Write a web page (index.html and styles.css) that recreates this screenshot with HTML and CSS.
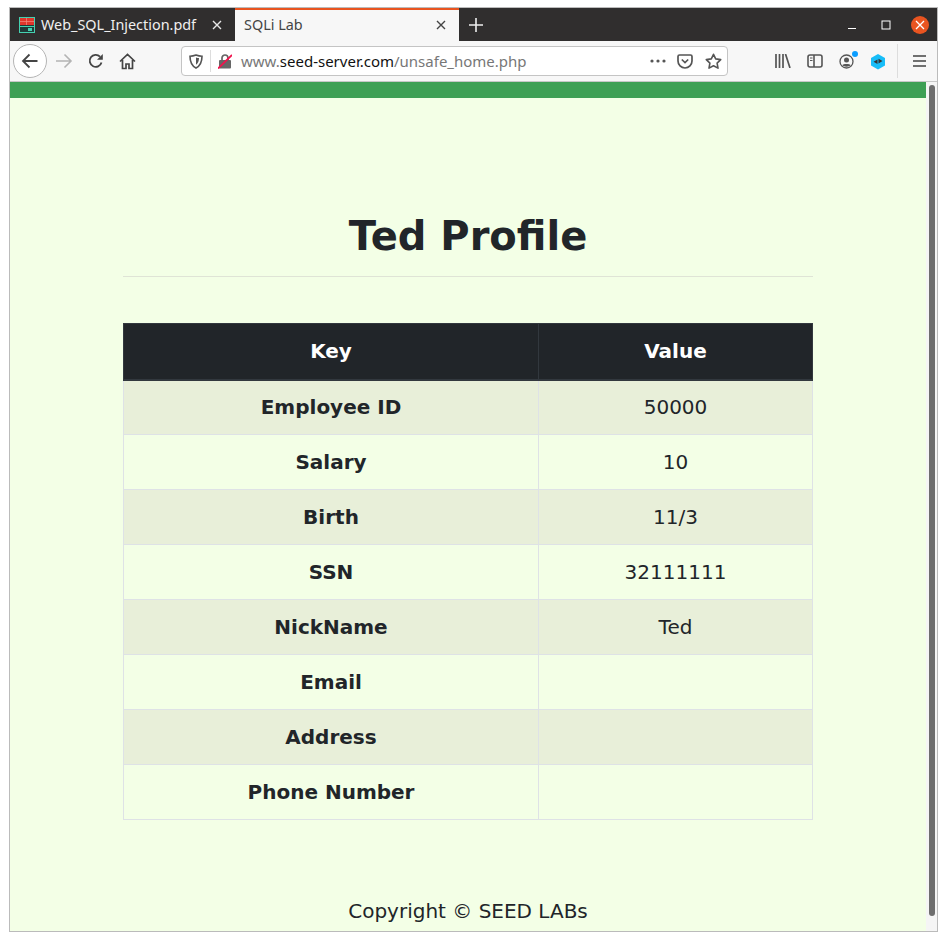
FILE: index.html
```html
<!DOCTYPE html>
<html lang="en">
<head>
    <meta charset="UTF-8">
    <title>SQLi Lab</title>
    <link rel="stylesheet" href="styles.css">
</head>
<body>
    <div class="window">
        <!-- Tab strip -->
        <div class="tabstrip">
            <div class="tab">
                <svg class="favicon" width="16" height="16" viewBox="0 0 16 16">
                    <rect x="0.5" y="0.5" width="15" height="15" fill="#1f3a38" stroke="#45d0b0"/>
                    <rect x="1" y="1" width="14" height="7" fill="#e0352b"/>
                    <path d="M7.500 1v7M1 4.500h14" stroke="#f08a80" stroke-width="0.700"/>
                    <rect x="1" y="9" width="14" height="1" fill="#45d0b0"/>
                    <rect x="9" y="11" width="4" height="3" fill="#45d0b0"/>
                </svg>
                <span class="tab-title">Web_SQL_Injection.pdf</span>
                <svg class="tab-close" width="10" height="10" viewBox="0 0 10 10"><path d="M1 1l8 8M9 1l-8 8" stroke="#e8e8e8" stroke-width="1.4"/></svg>
            </div>
            <div class="tab tab-active">
                <span class="tab-title">SQLi Lab</span>
                <svg class="tab-close" width="10" height="10" viewBox="0 0 10 10"><path d="M1 1l8 8M9 1l-8 8" stroke="#444" stroke-width="1.4"/></svg>
            </div>
            <svg class="new-tab" width="14" height="14" viewBox="0 0 14 14"><path d="M7 0v14M0 7h14" stroke="#eee" stroke-width="1.6"/></svg>
            <div class="win-controls">
                <svg width="10" height="10" viewBox="0 0 10 10"><path d="M1 8.500h8" stroke="#fff" stroke-width="1"/></svg>
                <svg width="10" height="10" viewBox="0 0 10 10"><rect x="1" y="1" width="8" height="8" fill="none" stroke="#fff"/></svg>
                <span class="win-close">
                    <svg width="10" height="10" viewBox="0 0 10 10"><path d="M1 1l8 8M9 1l-8 8" stroke="#fff" stroke-width="1.3"/></svg>
                </span>
            </div>
        </div>

        <!-- Toolbar -->
        <div class="toolbar">
            <span class="back-btn">
                <svg width="18" height="16" viewBox="0 0 18 16"><path d="M16.500 8H2M8.500 1.500L2 8l6.500 6.500" fill="none" stroke="#444" stroke-width="1.800"/></svg>
            </span>
            <svg class="forward" width="18" height="16" viewBox="0 0 18 16"><path d="M1 8h15M9.500 1.500L16 8l-6.500 6.500" fill="none" stroke="#b4b4b4" stroke-width="1.600"/></svg>
            <svg class="reload" width="16" height="16" viewBox="0 0 16 16"><path d="M13.500 9.500A6 6 0 1 1 12 3.600" fill="none" stroke="#444" stroke-width="1.800"/><path d="M14.800 1v5.800H9z" fill="#444"/></svg>
            <svg class="home" width="17" height="17" viewBox="0 0 17 17"><path d="M1 8.500L8.500 1.500 16 8.500M3.500 7v8.500h3.500v-4.500h3v4.500h3.500V7" fill="none" stroke="#444" stroke-width="1.700"/></svg>
            <div class="urlbar">
                <svg class="shield" width="14" height="15" viewBox="0 0 14 15"><path d="M7 1c2 .8 4 1.200 6 1.200 0 5-1.500 9.500-6 11.800C2.500 11.700 1 7.200 1 2.200 3 2.200 5 1.800 7 1z" fill="none" stroke="#555" stroke-width="1.600"/><path d="M7 3.500c1 .4 2 .6 3 .6 0 2.800-1 5.300-3 6.700z" fill="#555"/></svg>
                <span class="url-sep"></span>
                <svg class="lock" width="14" height="15" viewBox="0 0 14 15"><rect x="1" y="6" width="12" height="8.500" rx="1" fill="#666"/><path d="M4 6V4a3 3 0 0 1 6 0v2" fill="none" stroke="#666" stroke-width="1.700"/><path d="M0 14.500L14 1" stroke="#f0134d" stroke-width="1.800"/></svg>
                <span class="url"><span class="url-dim">www.</span>seed-server.com<span class="url-dim">/unsafe_home.php</span></span>
                <svg class="dots" width="16" height="4" viewBox="0 0 16 4"><circle cx="2" cy="2" r="1.600" fill="#555"/><circle cx="8" cy="2" r="1.600" fill="#555"/><circle cx="14" cy="2" r="1.600" fill="#555"/></svg>
                <svg class="pocket" width="16" height="15" viewBox="0 0 16 15"><path d="M1 2.500A1.500 1.500 0 0 1 2.500 1h11A1.500 1.500 0 0 1 15 2.500V7a7 7 0 0 1-14 0z" fill="none" stroke="#555" stroke-width="1.700"/><path d="M4.800 5.500L8 8.500l3.200-3" fill="none" stroke="#555" stroke-width="1.700"/></svg>
                <svg class="star" width="17" height="16" viewBox="0 0 17 16"><path d="M8.500 1.300l2.200 4.600 5 .7-3.600 3.500.9 5-4.500-2.400L4 15.100l.9-5L1.300 6.600l5-.7z" fill="none" stroke="#555" stroke-width="1.600" stroke-linejoin="round"/></svg>
            </div>
            <div class="tool-icons">
                <svg width="16" height="14" viewBox="0 0 16 14"><path d="M1 0v14M4.500 0v14M8 0v14M10.500 0L15 14" stroke="#555" stroke-width="1.700" fill="none"/></svg>
                <svg width="16" height="14" viewBox="0 0 16 14"><rect x="1" y="1" width="14" height="12" rx="2" fill="none" stroke="#555" stroke-width="1.600"/><path d="M7 1v12" stroke="#555" stroke-width="1.600"/><path d="M3 4h2.500M3 6.500h2.500" stroke="#555" stroke-width="1.200"/></svg>
                <span class="account">
                    <svg width="15" height="15" viewBox="0 0 15 15"><circle cx="7.500" cy="7.500" r="6.500" fill="none" stroke="#555" stroke-width="1.300"/><circle cx="7.500" cy="6" r="2.500" fill="#555"/><path d="M3.200 11.300c1-1.800 7.600-1.800 8.600 0-1.800 1.900-6.800 1.900-8.600 0z" fill="#555"/></svg>
                    <i class="account-dot"></i>
                </span>
                <svg width="16" height="17" viewBox="0 0 16 17"><path d="M8 1l7 4v7.500l-7 4-7-4V5z" fill="#18bdf8"/><path d="M3.500 8.800L7.500 6.500v4.500zM12.500 8L8.500 5.800v4.600z" fill="#333"/></svg>
            </div>
            <span class="tool-sep"></span>
            <svg class="menu" width="13" height="12" viewBox="0 0 13 12"><path d="M0 1h13M0 6h13M0 11h13" stroke="#444" stroke-width="1.600"/></svg>
        </div>

        <!-- Page -->
        <div class="viewport">
            <div class="page">
                <div class="navbar"></div>
                <div class="container">
                    <h1>Ted Profile</h1>
                    <hr>
                    <table class="profile">
                        <thead>
                            <tr><th class="col-key">Key</th><th>Value</th></tr>
                        </thead>
                        <tbody>
                            <tr><th>Employee ID</th><td>50000</td></tr>
                            <tr><th>Salary</th><td>10</td></tr>
                            <tr><th>Birth</th><td>11/3</td></tr>
                            <tr><th>SSN</th><td>32111111</td></tr>
                            <tr><th>NickName</th><td>Ted</td></tr>
                            <tr><th>Email</th><td></td></tr>
                            <tr><th>Address</th><td></td></tr>
                            <tr><th>Phone Number</th><td></td></tr>
                        </tbody>
                    </table>
                    <p class="copyright">Copyright © SEED LABs</p>
                </div>
            </div>
            <div class="scrollbar"><div class="thumb"></div></div>
        </div>
    </div>
</body>
</html>
```

FILE: styles.css
```css
* {
    box-sizing: border-box;
}
html, body {
    height: 100%;
}
body {
    margin: 0;
    background-color: #fff;
    padding: 7px 10px 9px 9px;
    overflow: hidden;
}
.window {
    height: 925px;
    border: 1px solid #bbb;
    display: flex;
    flex-direction: column;
}

/* tab strip */
.tabstrip {
    height: 33px;
    background-color: #302e2e;
    display: flex;
    align-items: stretch;
    font-family: "Noto Sans", sans-serif;
    font-size: 14.4px;
    flex: none;
}
.tab {
    width: 225px;
    display: flex;
    align-items: center;
    padding-left: 9px;
    color: #f0f0f0;
}
.tab-title {
    flex: 1;
    margin-left: 6px;
}
.favicon {
    flex: none;
}
.tab-close {
    margin-right: 13px;
}
.tab-active {
    width: 224px;
    background-color: #f7f7f7;
    color: #444;
    border-top: 2px solid #e95420;
    padding: 0 0 2px 3px;
}
.new-tab {
    align-self: center;
    margin-left: 10px;
}
.win-controls {
    margin-left: auto;
    display: flex;
    align-items: center;
    gap: 24px;
    padding-right: 8px;
}
.win-close {
    width: 18px;
    height: 18px;
    margin-left: -4px;
    border-radius: 50%;
    background-color: #e95420;
    display: flex;
    align-items: center;
    justify-content: center;
}

/* toolbar */
.toolbar {
    height: 41px;
    background-color: #f7f7f7;
    border-bottom: 1px solid #c8c8c8;
    display: flex;
    align-items: center;
    flex: none;
    padding-left: 3px;
}
.back-btn {
    width: 34px;
    height: 34px;
    border: 1px solid #b5b5b5;
    border-radius: 50%;
    background-color: #fff;
    display: flex;
    align-items: center;
    justify-content: center;
}
.forward {
    margin-left: 8px;
}
.reload {
    margin-left: 15px;
}
.home {
    margin-left: 15px;
}
.urlbar {
    width: 547px;
    height: 30px;
    margin-left: 45px;
    background-color: #fff;
    border: 1px solid #c4c4c4;
    border-radius: 4px;
    display: flex;
    align-items: center;
    padding-left: 7px;
    font-family: "Noto Sans", sans-serif;
    font-size: 15px;
}
.url-sep {
    width: 1px;
    height: 22px;
    background-color: #ddd;
    margin-left: 7px;
}
.lock {
    margin-left: 7px;
}
.url {
    flex: 1;
    margin-left: 9px;
    color: #111;
}
.url-dim {
    color: #777;
}
.dots {
    margin-right: 11px;
}
.pocket {
    margin-right: 12px;
}
.star {
    margin-right: 5px;
}
.tool-icons {
    margin-left: 47px;
    display: flex;
    align-items: center;
    gap: 16px;
}
.account {
    position: relative;
    display: flex;
}
.account-dot {
    position: absolute;
    top: -3px;
    right: -4px;
    width: 6px;
    height: 6px;
    border-radius: 50%;
    background-color: #0a9dff;
}
.tool-sep {
    width: 1px;
    height: 34px;
    background-color: #ddd;
    margin-left: 11px;
}
.menu {
    margin-left: 15px;
}

/* page content */
.viewport {
    flex: 1;
    display: flex;
    min-height: 0;
}
.page {
    flex: 1;
    background-color: #f3ffe6;
    color: #212529;
    font-family: "DejaVu Sans", sans-serif;
}
.navbar {
    height: 16px;
    background-color: #3ea055;
}
.container {
    width: 690px;
    margin: 0 auto;
}
h1 {
    margin: 0;
    padding-top: 114px;
    font-size: 40px;
    line-height: 48px;
    font-weight: bold;
    text-align: center;
}
hr {
    margin: 16px 0 46px;
    border: none;
    border-top: 1px solid #dfe4d6;
}
.profile {
    width: 690px;
    border-collapse: collapse;
    table-layout: fixed;
    font-size: 20px;
}
.col-key {
    width: 415px;
}
.profile th, .profile td {
    height: 55px;
    padding: 0;
    text-align: center;
    border: 1px solid #dee2e6;
}
.profile thead th {
    height: 56px;
    background-color: #212529;
    color: #fff;
    border-color: #32383e;
    border-bottom-width: 2px;
}
.profile tbody tr:nth-child(odd) {
    background-color: #e8efd9;
}
.copyright {
    margin: 79px 0 0;
    font-size: 20px;
    line-height: 24px;
    text-align: center;
}
.scrollbar {
    width: 11px;
    flex: none;
    background-color: #f5f5f5;
    padding: 3px 2px 0 3px;
}
.thumb {
    height: 831px;
    border-radius: 4px;
    background-color: #6e6e6e;
}
```
